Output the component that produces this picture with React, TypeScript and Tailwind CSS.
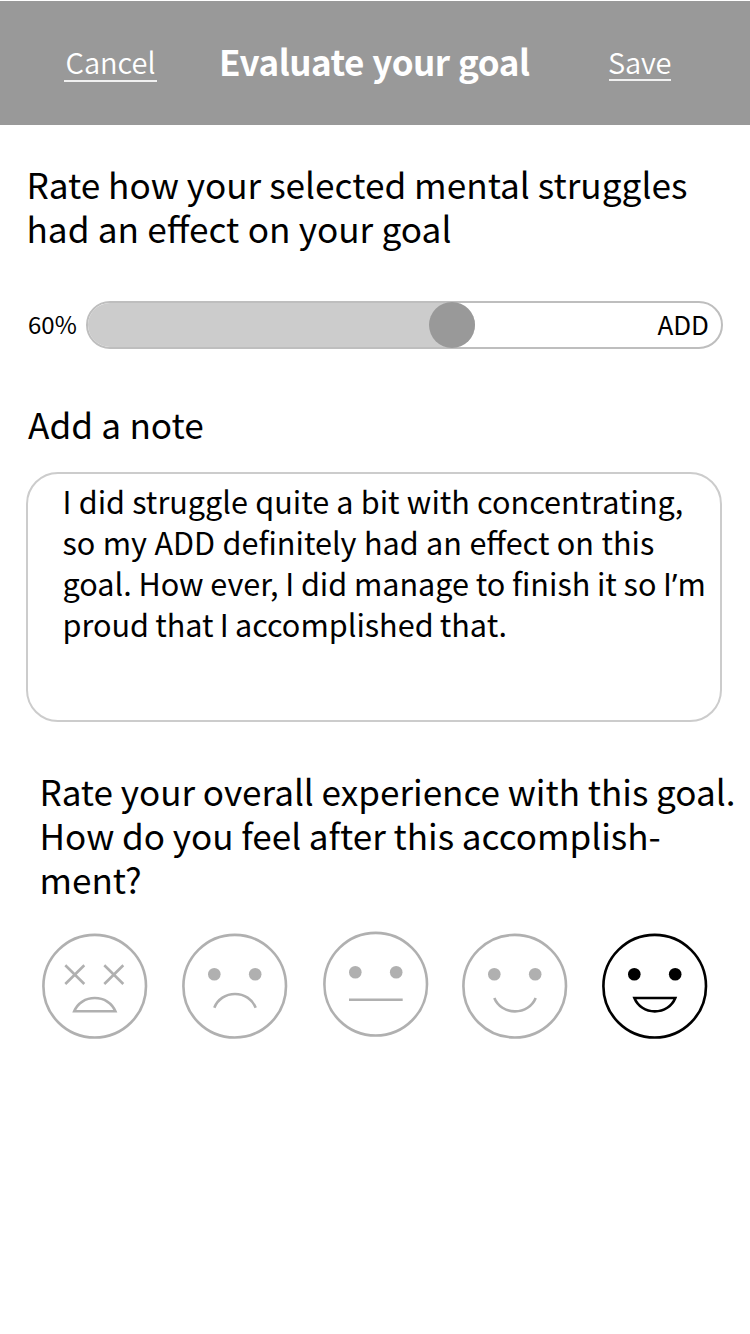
import React, { ReactNode } from 'react';

function Face({ active = false, className = '', children }: { active?: boolean; className?: string; children: ReactNode }) {
  return (
    <button className={`${active ? 'text-black' : 'text-[#b0b0b0]'} ${className}`}>
      <svg className="block h-[106px] w-[106px] overflow-visible" viewBox="0 0 106 106" fill="none" stroke="currentColor" strokeWidth="2.6">
        <circle cx="52.7" cy="53.2" r="51.3" />
        {children}
      </svg>
    </button>
  );
}

function Eyes() {
  return (
    <g fill="currentColor" stroke="none">
      <circle cx="32.3" cy="41.2" r="6.3" />
      <circle cx="73.2" cy="41.2" r="6.3" />
    </g>
  );
}

export default function App() {
  return (
    <main className="h-[1334px] w-[750px] overflow-hidden bg-white pt-px font-['Noto_Sans_CJK_SC',sans-serif] text-black">
      <header className="flex h-[124px] items-start bg-[#999] pl-16 pt-[41px] text-white">
        <button className="h-10 w-[93px] border-b-2 border-white/85 pl-[1.5px] text-left text-[29px] font-[350] leading-[38px]">
          <span className="block">Cancel</span>
        </button>
        <h1 className="ml-[62px] w-[330px] whitespace-nowrap text-[35px] font-bold leading-[38px] tracking-[-0.5px] [word-spacing:1px]">
          Evaluate your goal
        </h1>
        <button className="ml-[60px] h-[39px] w-[62px] whitespace-nowrap border-b-2 border-white/85 text-left text-[29px] font-[350] leading-[38px] tracking-[-0.2px]">
          <span className="-ml-px block">Save</span>
        </button>
      </header>

      <section className="pl-[26px] pt-[37px]">
        <h2 className="whitespace-nowrap pl-[0.5px] text-[35.2px] leading-[44px]">
          Rate how your selected mental struggles
          <br />
          <span className="[word-spacing:0.4px]">had an effect on your goal</span>
        </h2>
        <div className="mt-[51px] flex h-12 items-center">
          <span className="w-[60px] pl-[2px] text-[24px] leading-[46px] pb-0.5">60%</span>
          <div className="flex h-12 w-[637px] items-center justify-between rounded-full border-2 border-[#bebebe]">
            <div className="flex h-full w-[387px] items-center justify-end rounded-full bg-[#ccc]">
              <div className="h-[46px] w-[46px] rounded-full bg-[#999]" />
            </div>
            <span className="pb-0.5 pr-3 text-[26px] leading-[42px]">ADD</span>
          </div>
        </div>
      </section>

      <section className="pl-[26px] pt-[53px]">
        <h2 className="pl-[2px] text-[35.2px] leading-[44px] [word-spacing:0.4px]">Add a note</h2>
        <div className="mt-[26px] h-[250px] w-[696px] whitespace-nowrap rounded-[32px] border-2 border-[#ccc] pl-[34.5px] pt-[7px] text-[30.6px] leading-[41px]">
          <p className="[word-spacing:0.35px]">I did struggle quite a bit with concentrating,</p>
          <p className="[word-spacing:0.55px]">so my ADD definitely had an effect on this</p>
          <p className="[word-spacing:-0.2px]">
            goal. How ever, I did manage to finish it so I
            <span className="font-['Noto_Sans',sans-serif] leading-none">’</span>m
          </p>
          <p className="[word-spacing:-0.7px]">proud that I accomplished that.</p>
        </div>
      </section>

      <section className="pl-[39.5px] pt-[47px]">
        <h2 className="whitespace-nowrap text-[35.1px] leading-[44px] [word-spacing:-0.1px]">
          Rate your overall experience with this goal.
          <br />
          How do you feel after this accomplish-
          <br />
          ment?
        </h2>
        <div className="ml-[2.5px] mt-8 flex gap-[34px]">
          <Face>
            <path d="M23.3 32.3 42.3 51M42.3 32.3 23.3 51M62.3 32.3 81.3 51M81.3 32.3 62.3 51" />
            <path d="M32.2 78.3H73.4C70 70 62 65 52.8 65S35.6 70 32.2 78.3Z" />
          </Face>
          <Face>
            <Eyes />
            <path d="M32.3 74.7C35.7 66.3 43.7 61 53 61s17.3 5.3 20.7 13.7" />
          </Face>
          <Face className="translate-x-px -translate-y-0.5">
            <Eyes />
            <path d="M26 68.8H79.7" />
          </Face>
          <Face>
            <Eyes />
            <path d="M32.3 65C35.7 73.2 43.7 78.4 53 78.4S70.3 73.2 73.7 65" />
          </Face>
          <Face active>
            <Eyes />
            <path d="M32.4 65H73.3C70 73.2 62 78.4 52.8 78.4S35.7 73.2 32.4 65Z" />
          </Face>
        </div>
      </section>
    </main>
  );
}
